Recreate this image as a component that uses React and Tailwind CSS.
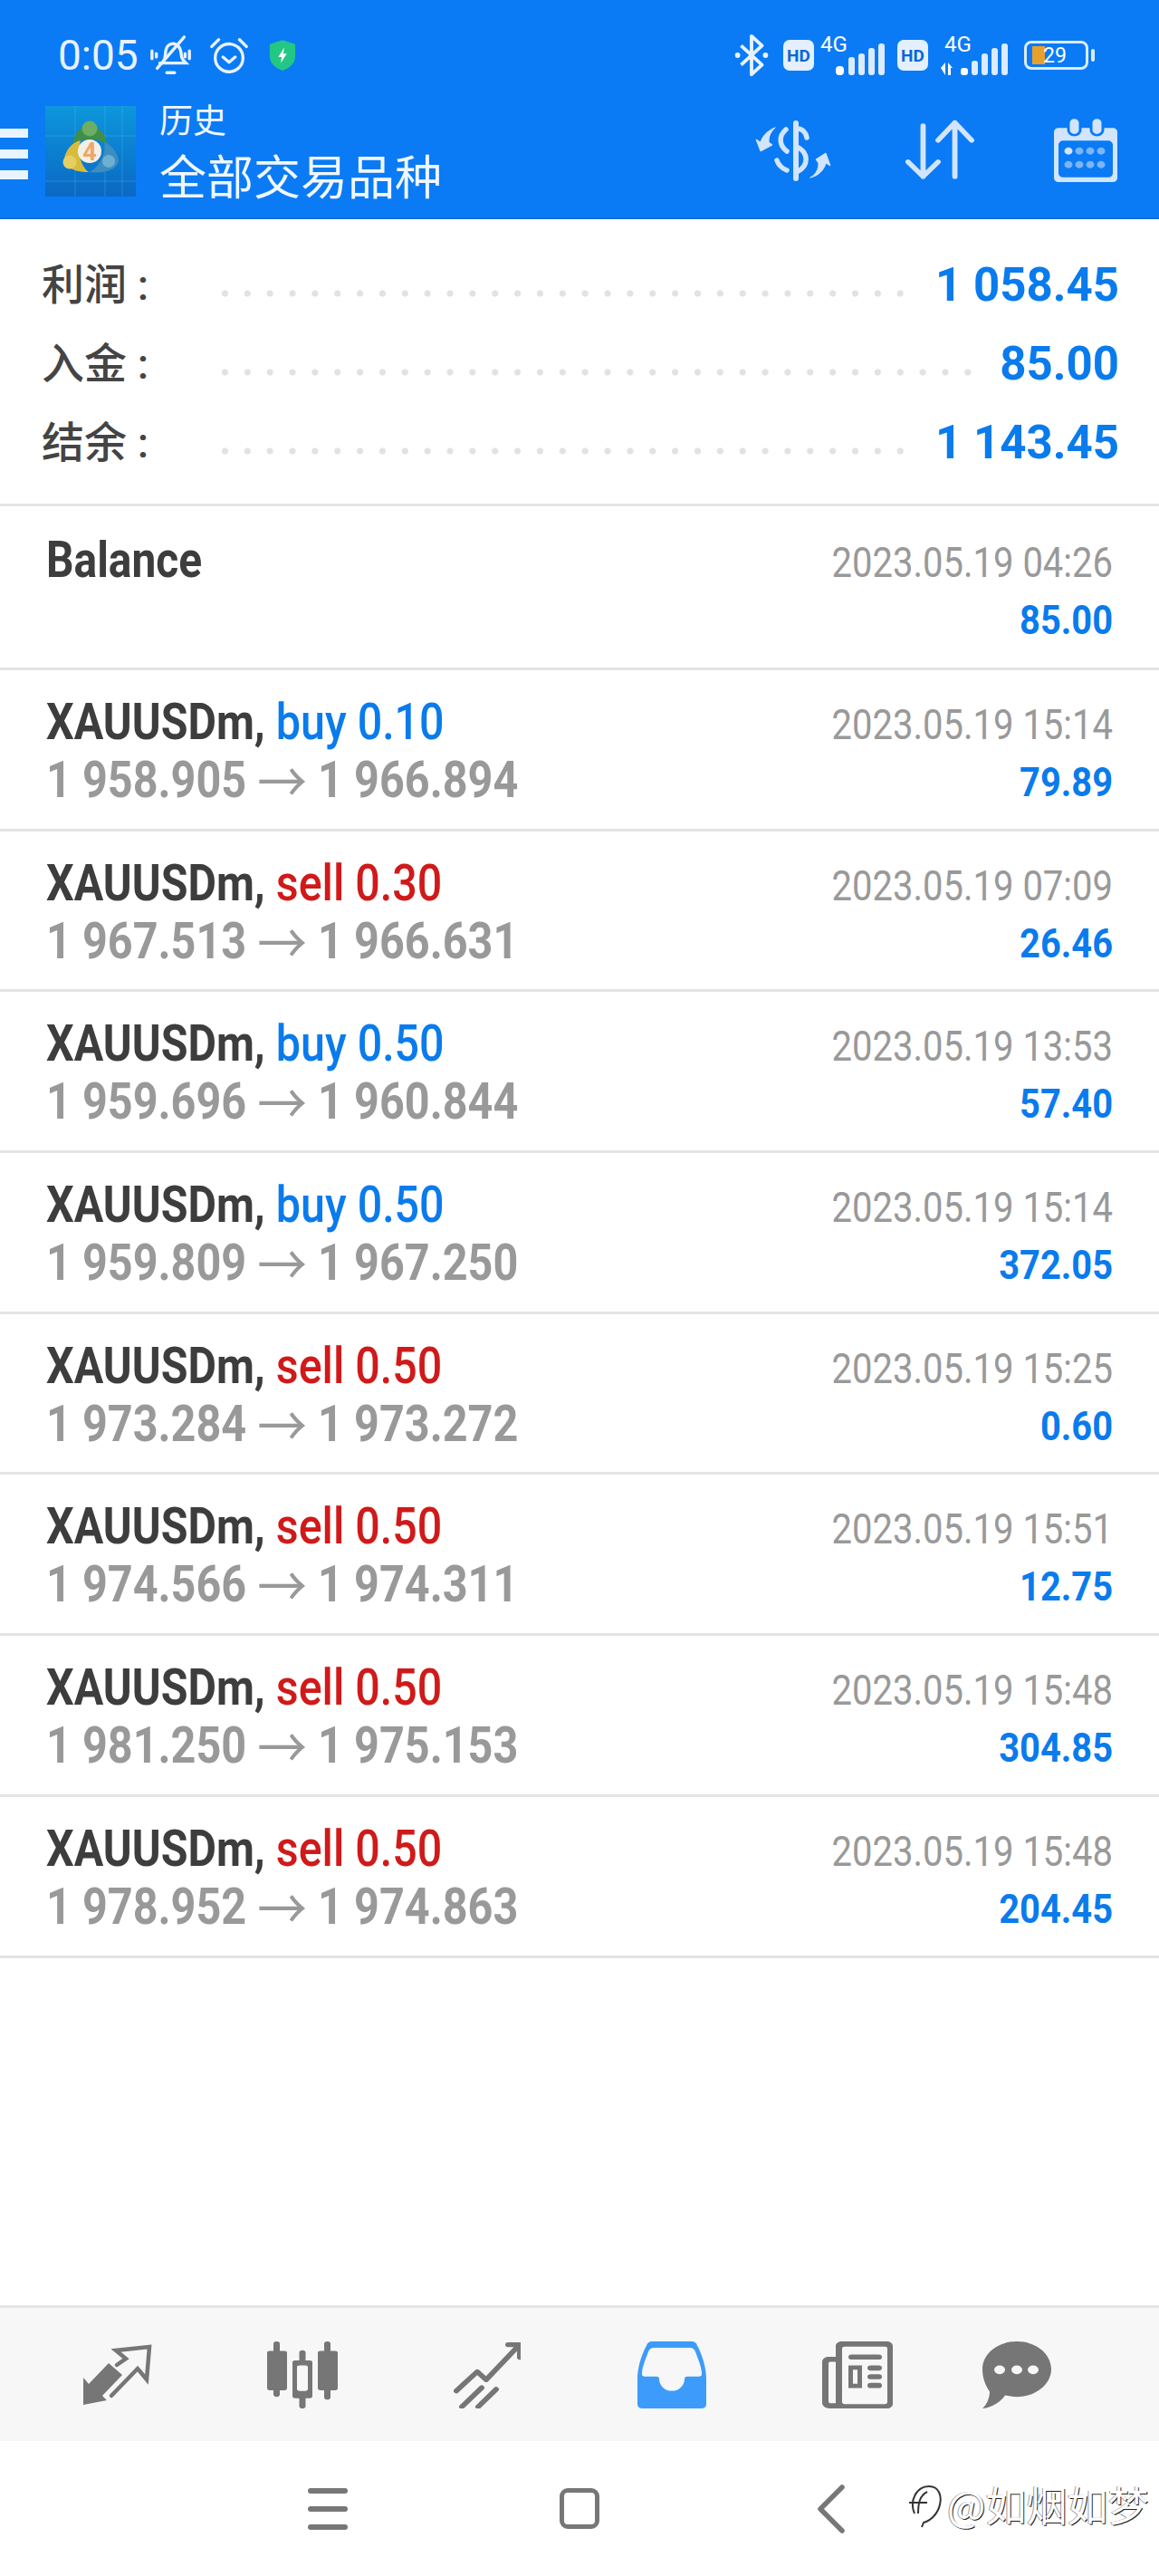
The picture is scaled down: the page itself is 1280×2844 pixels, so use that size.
const trades = [
  { side: "buy", lot: "0.10", open: "1 958.905", close: "1 966.894", time: "2023.05.19 15:14", profit: "79.89" },
  { side: "sell", lot: "0.30", open: "1 967.513", close: "1 966.631", time: "2023.05.19 07:09", profit: "26.46" },
  { side: "buy", lot: "0.50", open: "1 959.696", close: "1 960.844", time: "2023.05.19 13:53", profit: "57.40" },
  { side: "buy", lot: "0.50", open: "1 959.809", close: "1 967.250", time: "2023.05.19 15:14", profit: "372.05" },
  { side: "sell", lot: "0.50", open: "1 973.284", close: "1 973.272", time: "2023.05.19 15:25", profit: "0.60" },
  { side: "sell", lot: "0.50", open: "1 974.566", close: "1 974.311", time: "2023.05.19 15:51", profit: "12.75" },
  { side: "sell", lot: "0.50", open: "1 981.250", close: "1 975.153", time: "2023.05.19 15:48", profit: "304.85" },
  { side: "sell", lot: "0.50", open: "1 978.952", close: "1 974.863", time: "2023.05.19 15:48", profit: "204.45" },
];

const summary = [
  { label: "利润 :", value: "1 058.45" },
  { label: "入金 :", value: "85.00" },
  { label: "结余 :", value: "1 143.45" },
];

function SignalOne() {
  return (
    <svg viewBox="0 0 71 44" className="h-[44px] w-[71px] overflow-visible" fill="#dcebff">
      <text x="0" y="18" fontSize="24" fontFamily="Roboto, sans-serif" fill="#fff">4G</text>
      <rect x="17" y="34" width="9" height="10" rx="4" fill="#fff" />
      <rect x="31" y="24" width="7" height="20" rx="3" />
      <rect x="42" y="20" width="7" height="24" rx="3" />
      <rect x="53" y="14" width="7" height="30" rx="3" />
      <rect x="64" y="9" width="7" height="35" rx="3" />
    </svg>
  );
}

function SignalTwo() {
  return (
    <svg viewBox="0 0 75 44" className="h-[44px] w-[75px] overflow-visible" fill="#dcebff">
      <text x="4" y="18" fontSize="24" fontFamily="Roboto, sans-serif" fill="#fff">4G</text>
      <path d="M0 36l5-6v14zM8 30l5 6h-2v8H8z" fill="#fff" />
      <rect x="22" y="36" width="8" height="8" rx="3" fill="#fff" />
      <rect x="34" y="28" width="7" height="16" rx="3" />
      <rect x="45" y="20" width="7" height="24" rx="3" />
      <rect x="56" y="14" width="7" height="30" rx="3" />
      <rect x="67" y="9" width="7" height="35" rx="3" />
    </svg>
  );
}

function HdBadge() {
  return (
    <span className="flex h-[34px] w-[34px] items-center justify-center rounded-[7px] bg-[#e4f0ff] text-[19px] leading-none font-bold text-[#0a66d8]">
      HD
    </span>
  );
}

function StatusBar() {
  return (
    <div className="flex h-[100px] items-start justify-between pt-[36px] pr-[71px] pl-[64px]">
      <div className="flex items-center">
        <span className="text-[46px] leading-[46px] text-[#e8f2ff]">0:05</span>
        <svg viewBox="0 0 52 52" className="ml-[11px] h-[50px] w-[50px]" fill="none" stroke="#e8f2ff" strokeWidth="3.5" strokeLinecap="round">
          <path d="M17 33c3-4 2-9 3-13 1-5 5-8 10-7 4 1 6 4 7 8l1 7c1 3 3 5 5 7H13" />
          <path d="M10 41 41 5" />
          <path d="M21 46h9M4 21v9M9 24v4M47 21v9M42 24v4" />
        </svg>
        <svg viewBox="0 0 48 48" className="ml-[16px] h-[46px] w-[46px]" fill="none" stroke="#e8f2ff" strokeWidth="3.5" strokeLinecap="round" strokeLinejoin="round">
          <circle cx="24" cy="27" r="16" />
          <path d="M17 26l7 6 7-6M4 14 12 6M44 14 36 6" />
        </svg>
        <svg viewBox="0 0 32 38" className="ml-[21px] h-[36px] w-[30px]">
          <path d="M16 1l15 5v14c0 9-7 14-15 17C8 34 1 29 1 20V6z" fill="#23c784" />
          <path d="M18 10l-7 11h4l-1 7 7-11h-4z" fill="#fff" />
        </svg>
      </div>
      <div className="flex items-center">
        <svg viewBox="0 0 40 52" className="h-[50px] w-[40px]" fill="none" stroke="#e8f2ff" strokeWidth="4" strokeLinejoin="round">
          <path d="M8 15l24 22-12 11V4l12 11L8 37" />
          <circle cx="4" cy="26" r="3" fill="#e8f2ff" stroke="none" />
          <circle cx="36" cy="26" r="3" fill="#e8f2ff" stroke="none" />
        </svg>
        <span className="ml-[15px]"><HdBadge /></span>
        <span className="ml-[7px]"><SignalOne /></span>
        <span className="ml-[14px]"><HdBadge /></span>
        <span className="ml-[14px]"><SignalTwo /></span>
        <div className="relative ml-[17px] flex h-[32px] w-[71px] items-center rounded-[8px] border-[3px] border-[#dcebff] pl-[6px]">
          <span className="h-[20px] w-[14px] bg-[#e8a02c]" />
          <span className="absolute left-[18px] text-[23px] leading-none text-white">29</span>
        </div>
        <span className="ml-[3px] h-[14px] w-[4px] rounded-full bg-[#dcebff]" />
      </div>
    </div>
  );
}

function Mt4Logo() {
  return (
    <svg viewBox="0 0 100 100" className="h-[100px] w-[100px]">
      <defs>
        <linearGradient id="logoBg" x1="0" y1="0" x2="0" y2="1">
          <stop offset="0" stopColor="#0d97dc" />
          <stop offset="1" stopColor="#0a68c4" />
        </linearGradient>
      </defs>
      <rect width="100" height="100" fill="url(#logoBg)" />
      <path d="M0 33h100M0 83h100M33 0v100M66 0v100M85 0v100" stroke="#6cc4ee" strokeOpacity=".3" strokeWidth="1" />
      <path d="M31 42c0-12 8-20 18-20s18 8 19 20c-6-4-12-5-19-5s-13 1-18 5z" fill="#3f8f4a" />
      <circle cx="49" cy="25" r="8.5" fill="#6cae62" />
      <path d="M39 38c-9 2-16 10-18 20 0 8 8 15 27 15-8-6-13-20-9-35z" fill="#d9bb3c" />
      <circle cx="27" cy="62" r="7.5" fill="#e6cf62" />
      <path d="M66 40c8 4 14 12 15 20-1 9-12 15-33 13 10-4 19-18 18-33z" fill="#3c8dc0" />
      <circle cx="70" cy="61" r="7" fill="#6db0d4" />
      <circle cx="49" cy="50" r="13" fill="#f4efe6" />
      <text x="49" y="60" fontSize="27" fontWeight="700" textAnchor="middle" fontFamily="Roboto, sans-serif" fill="#eda868">4</text>
    </svg>
  );
}

function AppBar() {
  return (
    <div className="flex h-[140px] items-start">
      <div className="mt-[42px] flex h-[56px] w-[31px] flex-col justify-between">
        <span className="h-[10px] bg-[#e8f4ff]" />
        <span className="h-[10px] bg-[#e8f4ff]" />
        <span className="h-[10px] bg-[#e8f4ff]" />
      </div>
      <div className="mt-[17px] ml-[19px]">
        <Mt4Logo />
      </div>
      <div className="mt-[11px] ml-[26px] text-[#f0f7ff]">
        <div className="text-[37px] leading-[48px]">历史</div>
        <div className="mt-[9px] text-[52px] leading-[60px]">全部交易品种</div>
      </div>
      <div className="ml-auto flex items-start pr-[45px]">
        <svg viewBox="0 0 120 100" className="mt-[20px] h-[100px] w-[120px]" fill="none" stroke="#d2e5fd" strokeLinecap="round">
          <path d="M59 16v61" strokeWidth="6" />
          <path d="M60 22c6 0 10 4 11 10M60 42c13 6 14 21 0 28" strokeWidth="5.5" />
          <path d="M48 23c-8 7-8 17 1 24M38 57c2 6 6 9 11 11" strokeWidth="5.5" />
          <path d="M36 21C30 27 29 31 29 37l4 3-13 7-5-13 5 3c2-7 8-13 16-16z" fill="#d2e5fd" strokeWidth="1" />
          <path d="M75 76c7-4 9-10 9-16l-3-4 11-7 5 14-5-3c-2 8-8 14-17 16z" fill="#d2e5fd" strokeWidth="1" />
        </svg>
        <svg viewBox="0 0 80 80" preserveAspectRatio="none" className="mt-[32px] ml-[58px] h-[68px] w-[78px]" fill="none" stroke="#d2e5fd" strokeWidth="6" strokeLinecap="round" strokeLinejoin="round">
          <path d="M22 8v66M5 55l17 19 17-19" />
          <path d="M58 74V4M39 27 58 4l19 23" />
        </svg>
        <svg viewBox="0 0 72 82" preserveAspectRatio="none" className="mt-[29px] ml-[87px] h-[72px] w-[72px]">
          <path fillRule="evenodd" d="M6 14h60a5 5 0 0 1 5 5v58a5 5 0 0 1-5 5H6a5 5 0 0 1-5-5V19a5 5 0 0 1 5-5zM11 30a5 5 0 0 0-5 5v36a5 5 0 0 0 5 5h50a5 5 0 0 0 5-5V35a5 5 0 0 0-5-5z" fill="#d2e5fd" />
          <rect x="17" y="1" width="13" height="22" rx="6.5" fill="#d2e5fd" stroke="#0a7bf5" strokeWidth="3" />
          <rect x="42" y="1" width="13" height="22" rx="6.5" fill="#d2e5fd" stroke="#0a7bf5" strokeWidth="3" />
          <circle cx="17" cy="43" r="4.5" fill="#d2e5fd" />
          {[29, 41, 53].map((x) => (
            <circle key={x} cx={x} cy="43" r="4.5" fill="#7cb5fa" />
          ))}
          {[17, 29, 41, 53].map((x) => (
            <circle key={x} cx={x} cy="60" r="4.5" fill="#7cb5fa" />
          ))}
        </svg>
      </div>
    </div>
  );
}

function SummaryRow({ label, value }) {
  return (
    <div className="flex h-[87px] items-center">
      <span className="w-[189.5px] text-[47px] leading-none font-medium whitespace-pre text-[#444]">{label}</span>
      <span className="mt-[18px] h-[10px] flex-1 bg-[radial-gradient(circle,#e2e2e2_3.2px,transparent_4px)] bg-[length:24.87px_10px] bg-left bg-repeat-x" />
      <span className="ml-[28px] text-[51px] leading-none font-bold text-[#0a7bec]">{value}</span>
    </div>
  );
}

function TradeRow({ trade }) {
  const isBuy = trade.side === "buy";

  return (
    <div className="flex h-[177.7px] justify-between border-b-[3px] border-[#e4e4e4] px-[51px] pt-[25px]">
      <div>
        <div className="origin-left scale-x-[0.88] text-[55px] leading-[64px] whitespace-nowrap">
          <span className="font-bold text-[#3d3d3d]">XAUUSDm,</span>{" "}
          <span className={isBuy ? "font-medium text-[#0a7bec]" : "font-medium text-[#d01a1a]"}>
            {trade.side} {trade.lot}
          </span>
        </div>
        <div className="origin-left scale-x-[0.883] text-[55px] leading-[64px] font-bold whitespace-nowrap text-[#999]">
          {trade.open}{" "}
          <span className="inline-block translate-y-[7px] text-[62px] leading-[0] font-normal">→</span>{" "}
          {trade.close}
        </div>
      </div>
      <RightColumn time={trade.time} value={trade.profit} />
    </div>
  );
}

function RightColumn({ time, value }) {
  return (
    <div className="mt-[3px] text-right">
      <div className="origin-right scale-x-[0.87] text-[46px] leading-[64px] whitespace-nowrap text-[#999]">{time}</div>
      <div className="origin-right scale-x-[0.905] text-[44px] leading-[64px] font-bold text-[#0a7bec]">{value}</div>
    </div>
  );
}

const GREY = "#767676";

function TabBar() {
  return (
    <div className="flex h-[150px] items-center border-t-[3px] border-[#e4e4e4] bg-[#f7f7f7] pl-[70px]">
      <svg viewBox="0 0 120 100" className="h-[100px] w-[120px]" fill={GREY}>
        <path d="M22 53v30l26-5-5-5 22-23-15-13-22 23z" />
        <path d="M59 39l10-7-11-9 37-4-3 36-10-12-29 30" fill="none" stroke={GREY} strokeWidth="4.5" strokeLinecap="round" />
      </svg>
      <svg viewBox="0 0 78 92" preserveAspectRatio="none" className="ml-[105px] h-[74px] w-[78px]" fill={GREY}>
        <rect x="0" y="13" width="22" height="54" rx="3" />
        <rect x="7" y="0" width="7" height="76" rx="3.5" />
        <rect x="56" y="13" width="22" height="54" rx="3" />
        <rect x="63" y="0" width="7" height="80" rx="3.5" />
        <rect x="35.5" y="12" width="7" height="80" rx="3.5" />
        <rect x="28" y="26" width="22" height="52" rx="3" />
        <rect x="33" y="33" width="12" height="35" rx="3" fill="#f7f7f7" />
      </svg>
      <svg viewBox="0 0 74 84" preserveAspectRatio="none" className="ml-[128px] h-[74px] w-[74px]" fill="none" stroke={GREY} strokeWidth="6" strokeLinecap="round" strokeLinejoin="round">
        <path d="M3 62 26 38l10 10 36-43" />
        <path d="M60 4h13v16" />
        <path d="M9 82l22-24M27 82l20-22" />
      </svg>
      <svg viewBox="0 0 76 84" preserveAspectRatio="none" className="ml-[129px] h-[74px] w-[76px]">
        <path d="M16 0h44c3 0 5 2 6 5 6 13 10 28 10 42v32c0 3-2 5-5 5H5c-3 0-5-2-5-5V47C0 33 4 18 10 5c1-3 3-5 6-5z" fill="#3d9bfb" />
        <path d="M18 8h40c3 0 5 2 6 5 4 12 7 20 7 28 0 2-1 3-3 3H55c-2 0-3 1-3 3 0 8-6 15-14 15s-14-7-14-15c0-2-1-3-3-3H8c-2 0-3-1-3-3 0-8 3-16 7-28 1-3 3-5 6-5z" fill="#f7f7f7" />
      </svg>
      <svg viewBox="0 0 78 92" preserveAspectRatio="none" className="ml-[128px] h-[74px] w-[78px]" fill={GREY}>
        <path fillRule="evenodd" d="M21 0h51c3 0 6 3 6 6v80c0 3-3 6-6 6H8c-4 0-8-3-8-8V28c0-4 3-7 7-7h8V6c0-3 3-6 6-6zM25 7c-2 0-3 1-3 3v73c0 2 1 3 3 3h44c2 0 3-1 3-3V10c0-2-1-3-3-3zM15 28H9c-1 0-2 1-2 2v52c0 2 1 3 3 3h5z" />
        <rect x="29" y="18" width="37" height="7" rx="3.5" />
        <path fillRule="evenodd" d="M29 33h15v31H29zM34 39v19h5V39z" />
        <rect x="50" y="33" width="16" height="7" rx="3.5" />
        <rect x="50" y="45" width="16" height="7" rx="3.5" />
        <rect x="50" y="57" width="16" height="7" rx="3.5" />
      </svg>
      <svg viewBox="0 0 76 92" preserveAspectRatio="none" className="ml-[99px] h-[74px] w-[76px]" fill={GREY}>
        <path d="M38 0c21 0 38 17 38 38S59 76 38 76c-5 0-9-1-13-2-4 8-14 17-25 18 5-5 8-15 8-23C3 60 0 50 0 38 0 17 17 0 38 0z" />
        <circle cx="19" cy="39" r="6" fill="#f7f7f7" />
        <circle cx="38" cy="39" r="6" fill="#f7f7f7" />
        <circle cx="56" cy="39" r="6" fill="#f7f7f7" />
      </svg>
    </div>
  );
}

function NavBar() {
  return (
    <div className="relative flex h-[149px] items-center bg-white pl-[340px]">
      <div className="flex h-[46px] w-[44px] flex-col justify-between">
        <span className="h-[6px] rounded-full bg-[#777]" />
        <span className="h-[6px] rounded-full bg-[#777]" />
        <span className="h-[6px] rounded-full bg-[#777]" />
      </div>
      <span className="ml-[234px] h-[45px] w-[44px] rounded-[9px] border-[5px] border-[#777]" />
      <svg viewBox="0 0 30 54" className="ml-[241px] h-[54px] w-[30px]" fill="none" stroke="#777" strokeWidth="5.5" strokeLinecap="round" strokeLinejoin="round">
        <path d="M27 3 3 27l24 24" />
      </svg>
      {/* watermark sits over the nav bar */}
      <div className="absolute top-[40px] left-[1002px] flex items-center text-[45px] leading-[60px] text-white [font-family:'Noto_Sans_CJK_SC',sans-serif] [text-shadow:1px_1px_0_#222,-1px_0_0_#999]">
        <svg viewBox="0 0 40 56" className="mr-[4px] h-[56px] w-[40px]" fill="none" stroke="#333" strokeWidth="2">
          <path d="M8 38c-6-14 2-30 16-30 12 0 14 12 12 20-2 10-10 18-18 20l-2 5" />
          <path d="M2 26h20M12 38c0-12 2-20 10-24" />
        </svg>
        @如烟如梦
      </div>
    </div>
  );
}

export default function App() {
  return (
    <div className="flex h-[2844px] w-[1280px] flex-col bg-white [font-family:Roboto,'Noto_Sans_CJK_SC',sans-serif]">
      <header className="border-b-[2px] border-[#0a6fd8] bg-[#0a7bf5]">
        <StatusBar />
        <AppBar />
      </header>

      <section className="border-b-[3px] border-[#e4e4e4] pt-[29px] pr-[44px] pb-[24px] pl-[46px]">
        {summary.map((item) => (
          <SummaryRow key={item.label} label={item.label} value={item.value} />
        ))}
      </section>

      <div className="flex h-[181px] justify-between border-b-[3px] border-[#e4e4e4] px-[51px] pt-[27px]">
        <div className="origin-left scale-x-[0.87] text-[55px] leading-[64px] font-bold text-[#3d3d3d]">Balance</div>
        <RightColumn time="2023.05.19 04:26" value="85.00" />
      </div>

      {trades.map((trade) => (
        <TradeRow key={trade.open} trade={trade} />
      ))}

      <div className="flex-1" />

      <TabBar />
      <NavBar />
    </div>
  );
}
